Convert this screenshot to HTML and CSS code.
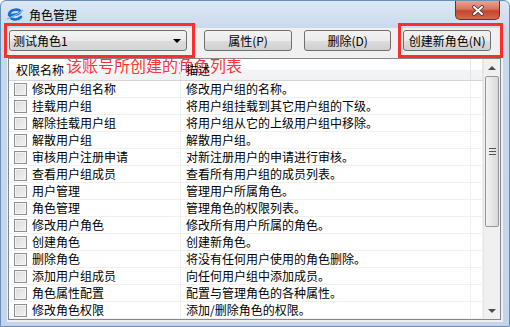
FILE: index.html
```html
<!DOCTYPE html>
<html lang="zh-CN">
<head>
    <meta charset="UTF-8">
    <title>角色管理</title>
    <link rel="stylesheet" href="styles.css">
</head>
<body>
    <div class="window">
        <div class="titlebar">
            <svg class="app-icon" width="18" height="16" viewBox="0 0 18 16">
                <path d="M3 9 C3 3 15 2 14 6 C13 9 6 9 4 9" fill="none" stroke="#1a6fd0" stroke-width="2.6" stroke-linecap="round"/>
                <path d="M4 9 C4 14 11 15 15 11" fill="none" stroke="#1a6fd0" stroke-width="2.6" stroke-linecap="round"/>
                <path d="M1 13 C5 11 12 9 17 4" fill="none" stroke="#7fb4ec" stroke-width="1.2"/>
            </svg>
            <span class="title">角色管理</span>
            <div class="close-btn">
                <svg width="14" height="11" viewBox="0 0 14 11">
                    <path d="M3 2 L11 9 M11 2 L3 9" stroke="#3a3a3a" stroke-width="3.6" stroke-linecap="round"/>
                    <path d="M3 2 L11 9 M11 2 L3 9" stroke="#fff" stroke-width="2" stroke-linecap="round"/>
                </svg>
            </div>
        </div>

        <div class="client">
            <div class="toolbar">
                <div class="combo">
                    <span>测试角色1</span>
                    <span class="combo-arrow"></span>
                </div>
                <div class="btn">属性(P)</div>
                <div class="btn">删除(D)</div>
                <div class="btn">创建新角色(N)</div>
            </div>

            <div class="listview">
                <div class="list-body">
                    <div class="list-head">
                        <div class="cell col-name">权限名称</div>
                        <div class="cell col-desc">描述</div>
                        <div class="cell col-rest"></div>
                        <span class="note">该账号所创建的角色列表</span>
                    </div>
                    <div class="row"><div class="cell col-name"><span class="check"></span>修改用户组名称</div><div class="cell col-desc">修改用户组的名称。</div><div class="cell col-rest"></div></div>
                    <div class="row"><div class="cell col-name"><span class="check"></span>挂载用户组</div><div class="cell col-desc">将用户组挂载到其它用户组的下级。</div><div class="cell col-rest"></div></div>
                    <div class="row"><div class="cell col-name"><span class="check"></span>解除挂载用户组</div><div class="cell col-desc">将用户组从它的上级用户组中移除。</div><div class="cell col-rest"></div></div>
                    <div class="row"><div class="cell col-name"><span class="check"></span>解散用户组</div><div class="cell col-desc">解散用户组。</div><div class="cell col-rest"></div></div>
                    <div class="row"><div class="cell col-name"><span class="check"></span>审核用户注册申请</div><div class="cell col-desc">对新注册用户的申请进行审核。</div><div class="cell col-rest"></div></div>
                    <div class="row"><div class="cell col-name"><span class="check"></span>查看用户组成员</div><div class="cell col-desc">查看所有用户组的成员列表。</div><div class="cell col-rest"></div></div>
                    <div class="row"><div class="cell col-name"><span class="check"></span>用户管理</div><div class="cell col-desc">管理用户所属角色。</div><div class="cell col-rest"></div></div>
                    <div class="row"><div class="cell col-name"><span class="check"></span>角色管理</div><div class="cell col-desc">管理角色的权限列表。</div><div class="cell col-rest"></div></div>
                    <div class="row"><div class="cell col-name"><span class="check"></span>修改用户角色</div><div class="cell col-desc">修改所有用户所属的角色。</div><div class="cell col-rest"></div></div>
                    <div class="row"><div class="cell col-name"><span class="check"></span>创建角色</div><div class="cell col-desc">创建新角色。</div><div class="cell col-rest"></div></div>
                    <div class="row"><div class="cell col-name"><span class="check"></span>删除角色</div><div class="cell col-desc">将没有任何用户使用的角色删除。</div><div class="cell col-rest"></div></div>
                    <div class="row"><div class="cell col-name"><span class="check"></span>添加用户组成员</div><div class="cell col-desc">向任何用户组中添加成员。</div><div class="cell col-rest"></div></div>
                    <div class="row"><div class="cell col-name"><span class="check"></span>角色属性配置</div><div class="cell col-desc">配置与管理角色的各种属性。</div><div class="cell col-rest"></div></div>
                    <div class="row"><div class="cell col-name"><span class="check"></span>修改角色权限</div><div class="cell col-desc">添加/删除角色的权限。</div><div class="cell col-rest"></div></div>
                </div>
                <div class="scrollbar">
                    <div class="sb-arrow"><span class="tri-up"></span></div>
                    <div class="sb-track">
                        <div class="sb-thumb"><span class="grip"></span></div>
                    </div>
                    <div class="sb-arrow"><span class="tri-down"></span></div>
                </div>
            </div>
        </div>

        <div class="mark mark-combo"></div>
        <div class="mark mark-create"></div>
    </div>
</body>
</html>
```

FILE: styles.css
```css
* {
    box-sizing: border-box;
}

body {
    margin: 0;
    padding: 0;
    font-family: "Noto Sans CJK SC", "Liberation Sans", sans-serif;
    font-size: 12px;
    color: #000;
    background-color: #fff;
}

.window {
    position: relative;
    width: 510px;
    height: 327px;
    background: linear-gradient(to bottom, #dce7f4 0px, #c9d9ed 28px, #c3d5ec 100%);
    border: 1px solid #6d8db5;
    border-radius: 6px 6px 0 0;
    display: flex;
    flex-direction: column;
    overflow: hidden;
}

.titlebar {
    height: 27px;
    flex: none;
    display: flex;
    align-items: flex-start;
    padding-left: 5px;
}

.app-icon {
    margin-top: 5px;
}

.title {
    margin-left: 5px;
    margin-top: 5px;
    line-height: 17px;
    font-size: 12px;
}

.close-btn {
    margin-left: auto;
    margin-right: 9px;
    width: 45px;
    height: 19px;
    border: 1px solid #7a2a1f;
    border-top: none;
    border-radius: 0 0 5px 5px;
    background: linear-gradient(to bottom, #e6a696 0%, #d8735d 45%, #c4442c 55%, #cf6a4e 100%);
    display: flex;
    align-items: center;
    justify-content: center;
}

.client {
    flex: 1;
    margin: 0 6px 6px 6px;
    background-color: #f0f0f0;
    display: flex;
    flex-direction: column;
}

.toolbar {
    display: flex;
    padding: 2px 0 0 2px;
    height: 23px;
    flex: none;
}

.combo {
    width: 179px;
    height: 21px;
    border: 1px solid #707070;
    border-radius: 3px;
    background: linear-gradient(to bottom, #f4f4f4 0%, #eaeaea 50%, #dcdcdc 51%, #d4d4d4 100%);
    display: flex;
    align-items: center;
    padding-left: 3px;
    padding-right: 5px;
    margin-right: 17px;
}

.combo-arrow {
    margin-left: auto;
    width: 0;
    height: 0;
    border-left: 4px solid transparent;
    border-right: 4px solid transparent;
    border-top: 4px solid #000;
}

.btn {
    width: 88px;
    height: 21px;
    border: 1px solid #707070;
    border-radius: 3px;
    background: linear-gradient(to bottom, #f2f2f2 0%, #ebebeb 50%, #dddddd 51%, #cfcfcf 100%);
    display: flex;
    align-items: center;
    justify-content: center;
    margin-right: 12px;
}

.listview {
    margin: 7px 2px 2px 1px;
    flex: 1;
    border: 1px solid #828790;
    background-color: #fff;
    display: flex;
}

.list-body {
    flex: 1;
    display: flex;
    flex-direction: column;
}

.list-head {
    position: relative;
    height: 22px;
    flex: none;
    display: grid;
    grid-template-columns: 172px 290px 1fr;
    background: linear-gradient(to bottom, #ffffff 0%, #ffffff 50%, #f3f4f6 51%, #f1f2f4 100%);
    border-bottom: 1px solid #d5d5d5;
}

.list-head .cell {
    position: relative;
    z-index: 1;
    line-height: 21px;
    border-right: 1px solid #e3e5e8;
}

.list-head .col-name {
    padding-left: 7px;
}

.note {
    position: absolute;
    left: 57px;
    top: -5px;
    font-size: 16px;
    line-height: 22px;
    color: #ff3333;
    white-space: nowrap;
    z-index: 0;
}

.row {
    height: 17px;
    flex: none;
    display: grid;
    grid-template-columns: 172px 290px 1fr;
    border-bottom: 1px solid #f0f0f0;
}

.cell {
    line-height: 16px;
    white-space: nowrap;
    overflow: hidden;
}

.row .cell {
    border-right: 1px solid #f0f0f0;
}

.col-name {
    display: flex;
    align-items: center;
    padding-left: 5px;
}

.col-desc {
    padding-left: 5px;
}

.check {
    width: 13px;
    height: 13px;
    border: 1px solid #8e8f8f;
    background: linear-gradient(135deg, #dcdcdc 0%, #f2f2f2 100%);
    box-shadow: inset 0 0 0 1px #f4f4f4;
    margin-right: 5px;
    flex: none;
}

.scrollbar {
    width: 17px;
    flex: none;
    background-color: #f0f0f0;
    border-left: 1px solid #e6e6e6;
    display: flex;
    flex-direction: column;
}

.sb-arrow {
    height: 17px;
    display: flex;
    align-items: center;
    justify-content: center;
}

.tri-up {
    width: 0;
    height: 0;
    border-left: 4px solid transparent;
    border-right: 4px solid transparent;
    border-bottom: 4px solid #4d4d4d;
}

.tri-down {
    width: 0;
    height: 0;
    border-left: 4px solid transparent;
    border-right: 4px solid transparent;
    border-top: 4px solid #4d4d4d;
}

.sb-track {
    flex: 1;
}

.sb-thumb {
    margin: 0 1px;
    height: 151px;
    border: 1px solid #979797;
    border-radius: 2px;
    background: linear-gradient(to right, #f2f2f2 0%, #e6e6e6 50%, #d8d8d8 100%);
    display: flex;
    align-items: center;
    justify-content: center;
}

.grip {
    width: 7px;
    height: 7px;
    border-top: 1px solid #555;
    border-bottom: 1px solid #555;
    background: linear-gradient(to bottom, transparent 2px, #555 2px, #555 3px, transparent 3px);
}

.mark {
    position: absolute;
    border: 3px solid #ff2e2e;
}

.mark-combo {
    left: 3px;
    top: 22px;
    width: 191px;
    height: 35px;
}

.mark-create {
    left: 397px;
    top: 22px;
    width: 105px;
    height: 35px;
}
```
